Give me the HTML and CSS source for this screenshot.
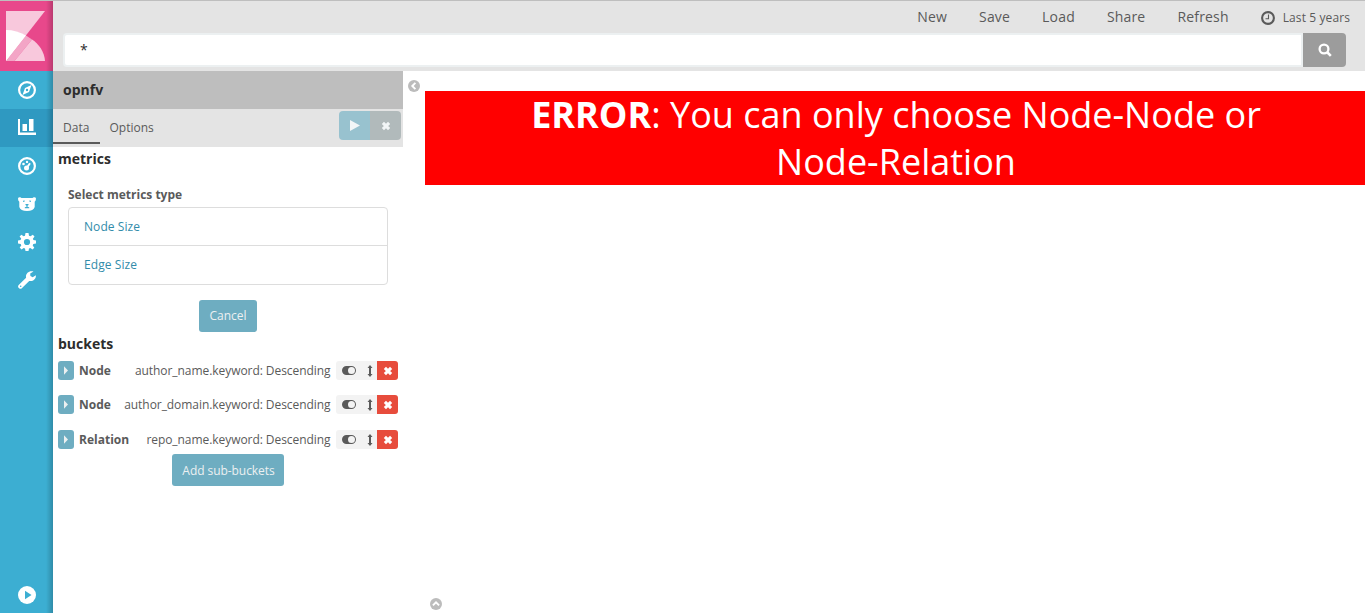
FILE: index.html
```html
<!DOCTYPE html>
<html lang="en">
<head>
<meta charset="utf-8">
<title>opnfv - Kibana</title>
<link rel="stylesheet" href="styles.css">
</head>
<body>
<svg class="defs" width="0" height="0">
  <defs>
    <symbol id="close" viewBox="0 0 10 10"><path d="M1.900 1.900 8.100 8.100M8.100 1.900 1.900 8.100" stroke="currentColor" stroke-width="3.100"/></symbol>
    <symbol id="toggle" viewBox="0 0 14 9"><path fill="currentColor" fill-rule="evenodd" d="M4.500 0H9.500A4.500 4.500 0 0 1 9.500 9H4.500A4.500 4.500 0 0 1 4.500 0ZM9.500 1A3.500 3.500 0 0 0 9.500 8 3.500 3.500 0 0 0 9.500 1Z"/></symbol>
    <symbol id="updown" viewBox="0 0 6 12"><path fill="currentColor" d="M3 0 5.500 3H4V9H5.500L3 12 .500 9H2V3H.500Z"/></symbol>
    <symbol id="caret" viewBox="0 0 4 9"><path fill="currentColor" d="M0 .300 4 4.500 0 8.700Z"/></symbol>
  </defs>
</svg>
<div class="app">
  <nav class="sidebar">
    <a class="logo"><svg width="53" height="70" viewBox="0 0 53 70">
      <path fill="#f8c8dc" d="M6 10H45L6 60Z"/>
      <path fill="#f3a5c6" d="M26 34.500 32 38.500 14.500 60H6Z"/>
      <path fill="#f8c8dc" d="M32 38.500C39 43 44.500 51 45 60H14.500Z"/>
      <path fill="#fff" d="M6 29C13 29 20 31 26 34.500L6 60Z"/>
    </svg></a>
    <a class="item"><svg width="18" height="18" viewBox="0 0 18 18"><circle cx="9" cy="9" r="7.900" fill="none" stroke="#fff" stroke-width="2.200"/><path fill="#fff" fill-rule="evenodd" d="M13.500 4 11 11 4.500 14 7 7ZM9 7.800A1.200 1.200 0 1 0 9 10.200 1.200 1.200 0 0 0 9 7.800Z"/></svg></a>
    <a class="item active"><svg class="bars" width="18" height="16" viewBox="0 0 18 16"><path fill="#fff" d="M0 0H2V13.500H18V16H0ZM4.500 5H9V12H4.500ZM11 0H15.500V12H11Z"/></svg></a>
    <a class="item"><svg width="18" height="18" viewBox="0 0 18 18"><circle cx="9" cy="9" r="7.900" fill="none" stroke="#fff" stroke-width="2.200"/><circle cx="9" cy="4.900" r="1.200" fill="#fff"/><circle cx="5.500" cy="7" r="1.300" fill="#fff"/><path d="M8.700 11 12 6.200" stroke="#fff" stroke-width="2"/><circle cx="8.500" cy="11" r="2.500" fill="#fff"/></svg></a>
    <a class="item"><svg width="18" height="14" viewBox="0 0 18 14"><path fill="#fff" fill-rule="evenodd" d="M0 1.500Q.300 0 2.300.300L3.500.900H14.500L15.700.300Q17.700 0 18 1.500 18 3.800 16.700 4.800V10Q15.500 14 9 14T1.300 10V4.800Q0 3.800 0 1.500ZM5 3.800V5L7 4.300 6.500 3.500ZM13 3.800V5L11 4.300 11.500 3.500ZM7.500 7V8L8.500 8.800V9.800L6.800 10.300V11.300H11.200V10.300L9.500 9.800V8.800L10.500 8V7Z"/></svg></a>
    <a class="item"><svg width="18" height="18" viewBox="0 0 18 18"><path fill="#fff" fill-rule="evenodd" d="M7.500 0H10.500L11 2.700 12.500 3.300 14.800 1.700 16.500 3.500 14.900 5.700 15.400 7.100 18 7.500V10.500L15.300 11 14.700 12.400 16.300 14.700 14.500 16.400 12.300 14.900 11 15.400 10.500 18H7.500L7 15.400 5.700 14.900 3.500 16.400 1.700 14.600 3.300 12.400 2.700 11 0 10.500V7.500L2.600 7.100 3.200 5.600 1.600 3.500 3.400 1.700 5.600 3.300 7 2.700ZM9 5.900A3.100 3.100 0 1 0 9 12.100 3.100 3.100 0 0 0 9 5.900Z"/></svg></a>
    <a class="item"><svg width="18" height="18" viewBox="0 0 18 18"><path fill="#fff" fill-rule="evenodd" d="M15.500.500 12.200 2.600 12.400 5.100 14.700 6.300 17.900 4.300C18.200 8.400 14.700 10.800 11.200 9.900L3.800 17.300Q2.500 18.400 1.100 17.300L.6 16.700Q-.5 15.300.7 14.100L8.100 6.800C7.200 2.900 10.800-.9 15.500.500ZM2.700 14.500A.8.800 0 1 0 2.700 16.100.8.800 0 0 0 2.700 14.500Z"/></svg></a>
    <a class="item last"><svg width="18" height="18" viewBox="0 0 18 18"><circle cx="9" cy="9" r="9" fill="#fff"/><path d="M7 4.800V13.200L13.500 9Z" fill="#3caed2"/></svg></a>
  </nav>
  <div class="main">
    <header class="top">
      <div class="menu">
        <a>New</a><a>Save</a><a>Load</a><a>Share</a><a>Refresh</a>
        <a class="time"><svg width="14" height="14" viewBox="0 0 14 14"><circle cx="7" cy="7" r="5.900" fill="none" stroke="currentColor" stroke-width="2.100"/><path d="M7.500 3.600V7.700H4.500" fill="none" stroke="currentColor" stroke-width="1.100"/></svg>Last 5 years</a>
      </div>
      <div class="search"><div class="query">*</div><div class="go"><svg width="14" height="14" viewBox="0 0 14 14"><circle cx="6" cy="6" r="4.400" fill="none" stroke="#fff" stroke-width="2.300"/><path d="M9 9 12.800 12.800" stroke="#fff" stroke-width="2.600"/></svg></div></div>
    </header>
    <div class="content">
      <aside class="editor">
        <div class="title">opnfv</div>
        <div class="tabs">
          <a class="tab on">Data</a><a class="tab">Options</a>
          <div class="actions"><span class="apply"><svg width="10" height="11" viewBox="0 0 10 11"><path fill="currentColor" d="M0 0 10 5.500 0 11Z"/></svg></span><span class="discard"><svg width="10" height="10"><use href="#close"/></svg></span></div>
        </div>
        <div class="heading">metrics</div>
        <div class="picker">
          <div class="label">Select metrics type</div>
          <div class="list"><a>Node Size</a><a>Edge Size</a></div>
        </div>
        <div class="btn">Cancel</div>
        <div class="heading buckets">buckets</div>
        <div class="rows">
          <div class="row"><span class="open"><svg width="4" height="9"><use href="#caret"/></svg></span><b>Node</b><span class="desc">author_name.keyword: Descending</span><span class="tools"><svg width="14" height="9"><use href="#toggle"/></svg><svg width="6" height="12"><use href="#updown"/></svg></span><span class="remove"><svg width="10" height="10"><use href="#close"/></svg></span></div>
          <div class="row"><span class="open"><svg width="4" height="9"><use href="#caret"/></svg></span><b>Node</b><span class="desc">author_domain.keyword: Descending</span><span class="tools"><svg width="14" height="9"><use href="#toggle"/></svg><svg width="6" height="12"><use href="#updown"/></svg></span><span class="remove"><svg width="10" height="10"><use href="#close"/></svg></span></div>
          <div class="row"><span class="open"><svg width="4" height="9"><use href="#caret"/></svg></span><b>Relation</b><span class="desc">repo_name.keyword: Descending</span><span class="tools"><svg width="14" height="9"><use href="#toggle"/></svg><svg width="6" height="12"><use href="#updown"/></svg></span><span class="remove"><svg width="10" height="10"><use href="#close"/></svg></span></div>
        </div>
        <div class="btn sub">Add sub-buckets</div>
      </aside>
      <div class="collapse"><svg width="12" height="12" viewBox="0 0 12 12"><circle cx="6" cy="6" r="6" fill="#bcbcbc"/><path d="M7.400 2.900 4.300 6 7.400 9.100" fill="none" stroke="#fff" stroke-width="1.900"/></svg></div>
      <main class="vis">
        <div class="error"><b>ERROR</b>: You can only choose Node-Node or<br>Node-Relation</div>
        <div class="spy"><svg width="12" height="12" viewBox="0 0 12 12"><circle cx="6" cy="6" r="6" fill="#bcbcbc"/><path d="M2.900 7.400 6 4.300 9.100 7.400" fill="none" stroke="#fff" stroke-width="1.900"/></svg></div>
      </main>
    </div>
  </div>
</div>
</body>
</html>
```
FILE: styles.css
```css
* { box-sizing: border-box; }
body {
  margin: 0;
  font: 12px/18px "Open Sans", sans-serif;
  color: #5a5a5a;
  background: #fff;
  overflow: hidden;
}
svg { display: block; flex: none; }
.defs { position: absolute; }
.app { display: flex; height: 613px; border-top: 1px solid #bebebe; }
.sidebar {
  position: relative;
  width: 53px;
  flex: none;
  display: flex;
  flex-direction: column;
  background: #3caed2;
}
.sidebar::after {
  content: "";
  position: absolute;
  inset: 0 0 0 auto;
  width: 7px;
  background: linear-gradient(to right, rgba(0, 0, 0, 0), rgba(0, 0, 0, .2));
}
.logo { height: 70px; background: #e8488b; }
.item { height: 38px; display: flex; align-items: center; justify-content: center; padding-left: 1px; }
.item.active { background: #2f99c1; }
.item.last { margin-top: auto; margin-bottom: -1px; }
.bars { margin-bottom: 2px; }
.main { flex: 1; min-width: 0; display: flex; flex-direction: column; }
.top { height: 70px; background: #e4e4e4; }
.menu { height: 32px; display: flex; justify-content: flex-end; align-items: center; gap: 32px; padding-right: 15px; font-size: 14px; letter-spacing: .18px; }
.time { display: flex; align-items: center; gap: 8px; font-size: 12px; letter-spacing: .1px; padding-top: 1px; }
.search { display: flex; height: 34px; padding: 0 19px 0 10px; }
.query {
  flex: 1;
  border: 2px solid #ecf0f1;
  border-radius: 4px 0 0 4px;
  background: #fff;
  color: #2d2d2d;
  font-size: 14px;
  line-height: 30px;
  padding-left: 15px;
}
.go { width: 43px; display: flex; align-items: center; justify-content: center; background: #9c9c9c; border-radius: 0 4px 4px 0; }
.content { flex: 1; display: flex; }
.editor { width: 350px; flex: none; }
.title { height: 38px; padding-left: 10px; background: #bebebe; color: #2d2d2d; font-size: 14px; font-weight: 700; line-height: 38px; }
.tabs { height: 38px; display: flex; background: #e4e4e4; }
.tab { height: 35px; padding: 0 10px 0 9.5px; line-height: 37px; color: #5a5a5a; }
.tab.on { width: 47px; padding-left: 10px; border-bottom: 2px solid #5a5a5a; }
.actions { display: flex; margin: 2px 2px 0 auto; height: 29px; color: #f2f6f7; border-radius: 4px; overflow: hidden; }
.actions span { width: 31px; display: flex; align-items: center; justify-content: center; }
.apply { background: #98c2cf; }
.discard { background: #b1babb; }
.heading { padding-left: 5px; color: #2d2d2d; font-size: 14px; font-weight: 700; line-height: 24px; height: 24px; }
.picker { padding: 14px 15px 15px; }
.label { font-weight: 700; height: 22px; line-height: 20px; }
.list { height: 78px; border: 1px solid #ddd; border-radius: 4px; }
.list a { display: block; height: 37px; padding-left: 15px; line-height: 37px; color: #328caa; letter-spacing: .07px; }
.list a + a { height: 38px; border-top: 1px solid #ddd; }
.btn { width: 58px; height: 32px; margin: 0 auto; border-radius: 3px; background: #6eadc1; color: #ecf0f1; text-align: center; line-height: 31px; }
.btn.sub { width: 112px; padding-left: 1px; line-height: 33px; letter-spacing: -.06px; }
.rows { padding: 5px 5px 0; }
.row { display: flex; align-items: center; height: 19px; margin-bottom: 15px; }
.row:nth-child(2) { margin-bottom: 16px; }
.row:last-child { margin-bottom: 5px; }
.open { width: 16px; height: 19px; display: flex; align-items: center; justify-content: center; background: #6eadc1; color: #ecf0f1; border-radius: 3px; margin-right: 5px; }
.desc { margin-left: auto; margin-right: 5.5px; letter-spacing: -.06px; }
.tools { display: flex; align-items: center; gap: 11px; height: 19px; width: 41px; padding-left: 6px; background: #f3f3f3; border-radius: 3px 0 0 3px; }
.remove { width: 21px; height: 19px; display: flex; align-items: center; justify-content: center; background: #e74c3c; color: #fff; border-radius: 0 3px 3px 0; }
.collapse { width: 22px; padding: 9px 5px; }
.vis { flex: 1; display: flex; flex-direction: column; justify-content: space-between; padding-top: 20px; }
.error { height: 94px; padding-left: 2px; background: #f00; color: #fff; text-align: center; font-size: 36px; line-height: 47px; }
.spy { padding: 0 0 3px 5px; }
```
